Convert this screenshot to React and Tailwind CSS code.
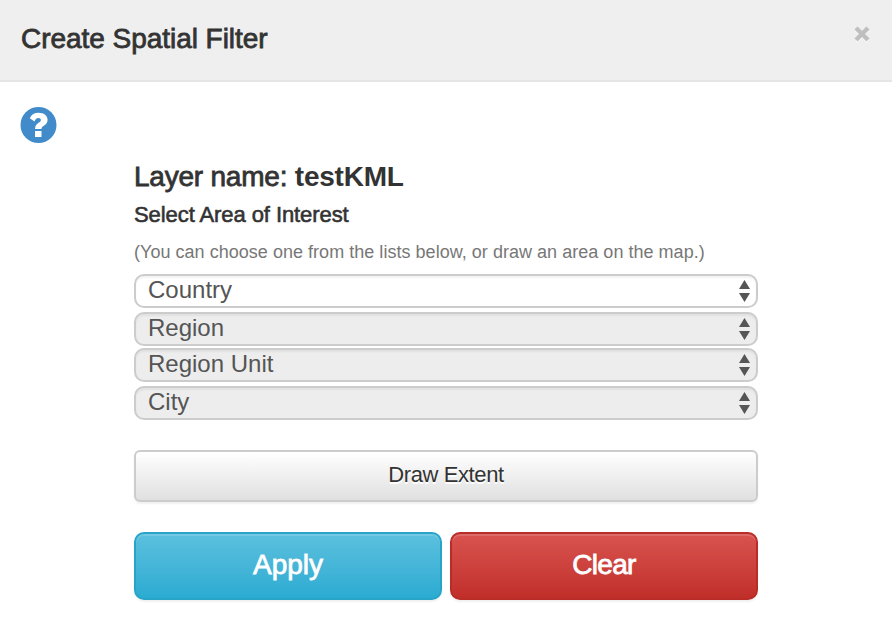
const areas = [
  { name: 'Country', style: 'bg-white' },
  { name: 'Region', style: 'bg-[#ededed] mt-1' },
  { name: 'Region Unit', style: 'bg-[#ededed] mt-0.5' },
  { name: 'City', style: 'bg-[#ededed] mt-1' },
];

function QuestionIcon() {
  return (
    <svg className="block h-9 w-[37px]" viewBox="0 0 37 36">
      <circle cx="18.5" cy="18" r="18" fill="#428bca" />
      <path
        d="M9.8 11.2C11.4 7.5 14.4 5.8 18.6 5.8C23.8 5.8 27.6 8.6 27.6 13C27.6 15.8 25.8 17.3 23.8 18.8C22.1 20 21.5 20.6 21.5 22H15C15 18.9 16.4 17.5 18.5 15.8C20 14.7 20.9 14 20.9 12.9C20.9 11.6 19.9 10.9 18.4 10.9C16.4 10.9 15.4 12.1 14.5 14.4Z"
        fill="#fff"
      />
      <path d="M15 24H21.5V30H15Z" fill="#fff" />
    </svg>
  );
}

function AreaSelect({ name, style }) {
  return (
    <button
      className={`flex h-[34px] w-full items-center justify-between rounded-[10px] border-2 border-[#ccc] pr-[5px] pl-3 text-left shadow-[inset_0_2px_2px_rgba(0,0,0,0.05)] ${style}`}
    >
      <span className="-mt-0.5 text-2xl leading-[30px] text-[#555]">{name}</span>
      <svg className="block h-[22px] w-[12px]" viewBox="0 0 12 22" fill="#555">
        <path d="M0 9L5.5 0L11 9Z" />
        <path d="M0 13L5.5 22L11 13Z" />
      </svg>
    </button>
  );
}

export default function App() {
  return (
    <div className="h-[640px] w-[892px] overflow-hidden bg-white font-['Liberation_Sans',Arial,sans-serif] text-[#333]">
      <header className="flex h-[82px] items-start justify-between border-b-2 border-[#e5e5e5] bg-[#efefef] pr-[22px] pl-[21px]">
        <h1 className="mt-[19px] text-[28px] leading-10 tracking-[-0.04px] [-webkit-text-stroke:0.8px_#333]">
          Create Spatial Filter
        </h1>
        <button aria-label="Close" className="mt-[26px]">
          <svg className="block h-[18px] w-4" viewBox="0 0 16 18">
            <path d="M2 2L14 14M14 2L2 14" stroke="#fff" strokeWidth="4" transform="translate(0 1)" />
            <path d="M2 2L14 14M14 2L2 14" stroke="#bfbfbf" strokeWidth="4.4" />
          </svg>
        </button>
      </header>
      <div className="pt-[25px] pl-5">
        <QuestionIcon />
      </div>
      <main className="ml-[134px] w-[624px] pt-[14px]">
        <h2 className="h-10 text-[28px] leading-10 tracking-[-0.22px] [-webkit-text-stroke:0.8px_#333]">
          Layer name: <b className="[-webkit-text-stroke:0px]">testKML</b>
        </h2>
        <h3 className="mt-[3px] h-[30px] text-[22px] leading-[30px] tracking-[-0.08px] [-webkit-text-stroke:0.6px_#333]">
          Select Area of Interest
        </h3>
        <p className="mt-[9px] h-[24px] text-[18px] leading-[26px] tracking-[0.03px] text-[#777]">
          (You can choose one from the lists below, or draw an area on the map.)
        </p>
        <div className="mt-[11px]">
          {areas.map((area) => (
            <AreaSelect key={area.name} {...area} />
          ))}
        </div>
        <button className="mt-[30px] flex h-[52px] w-full items-center justify-center rounded-md border-2 border-[#ccc] bg-linear-to-b from-white to-[#e0e0e0] pb-1 text-[22px] tracking-[-0.4px] shadow-[inset_0_2px_0_rgba(255,255,255,0.15),0_2px_2px_rgba(0,0,0,0.06)] [text-shadow:0_2px_0_#fff]">
          Draw Extent
        </button>
        <div className="mt-[30px] grid grid-cols-2 gap-2 text-[28px] text-white [-webkit-text-stroke:0.8px_#fff]">
          <button className="h-[68px] rounded-[10px] border-2 border-[#28a4c9] bg-linear-to-b from-[#5bc0de] to-[#2aabd2] pb-[2px] shadow-[inset_0_2px_0_rgba(255,255,255,0.15),0_2px_2px_rgba(0,0,0,0.06)] [text-shadow:0_-1px_0_rgba(0,0,0,0.15)]">
            Apply
          </button>
          <button className="h-[68px] rounded-[10px] border-2 border-[#b92c28] bg-linear-to-b from-[#d9534f] to-[#c12e2a] pb-[2px] tracking-[-0.7px] shadow-[inset_0_2px_0_rgba(255,255,255,0.15),0_2px_2px_rgba(0,0,0,0.06)] [text-shadow:0_-1px_0_rgba(0,0,0,0.15)]">
            Clear
          </button>
        </div>
      </main>
    </div>
  );
}
